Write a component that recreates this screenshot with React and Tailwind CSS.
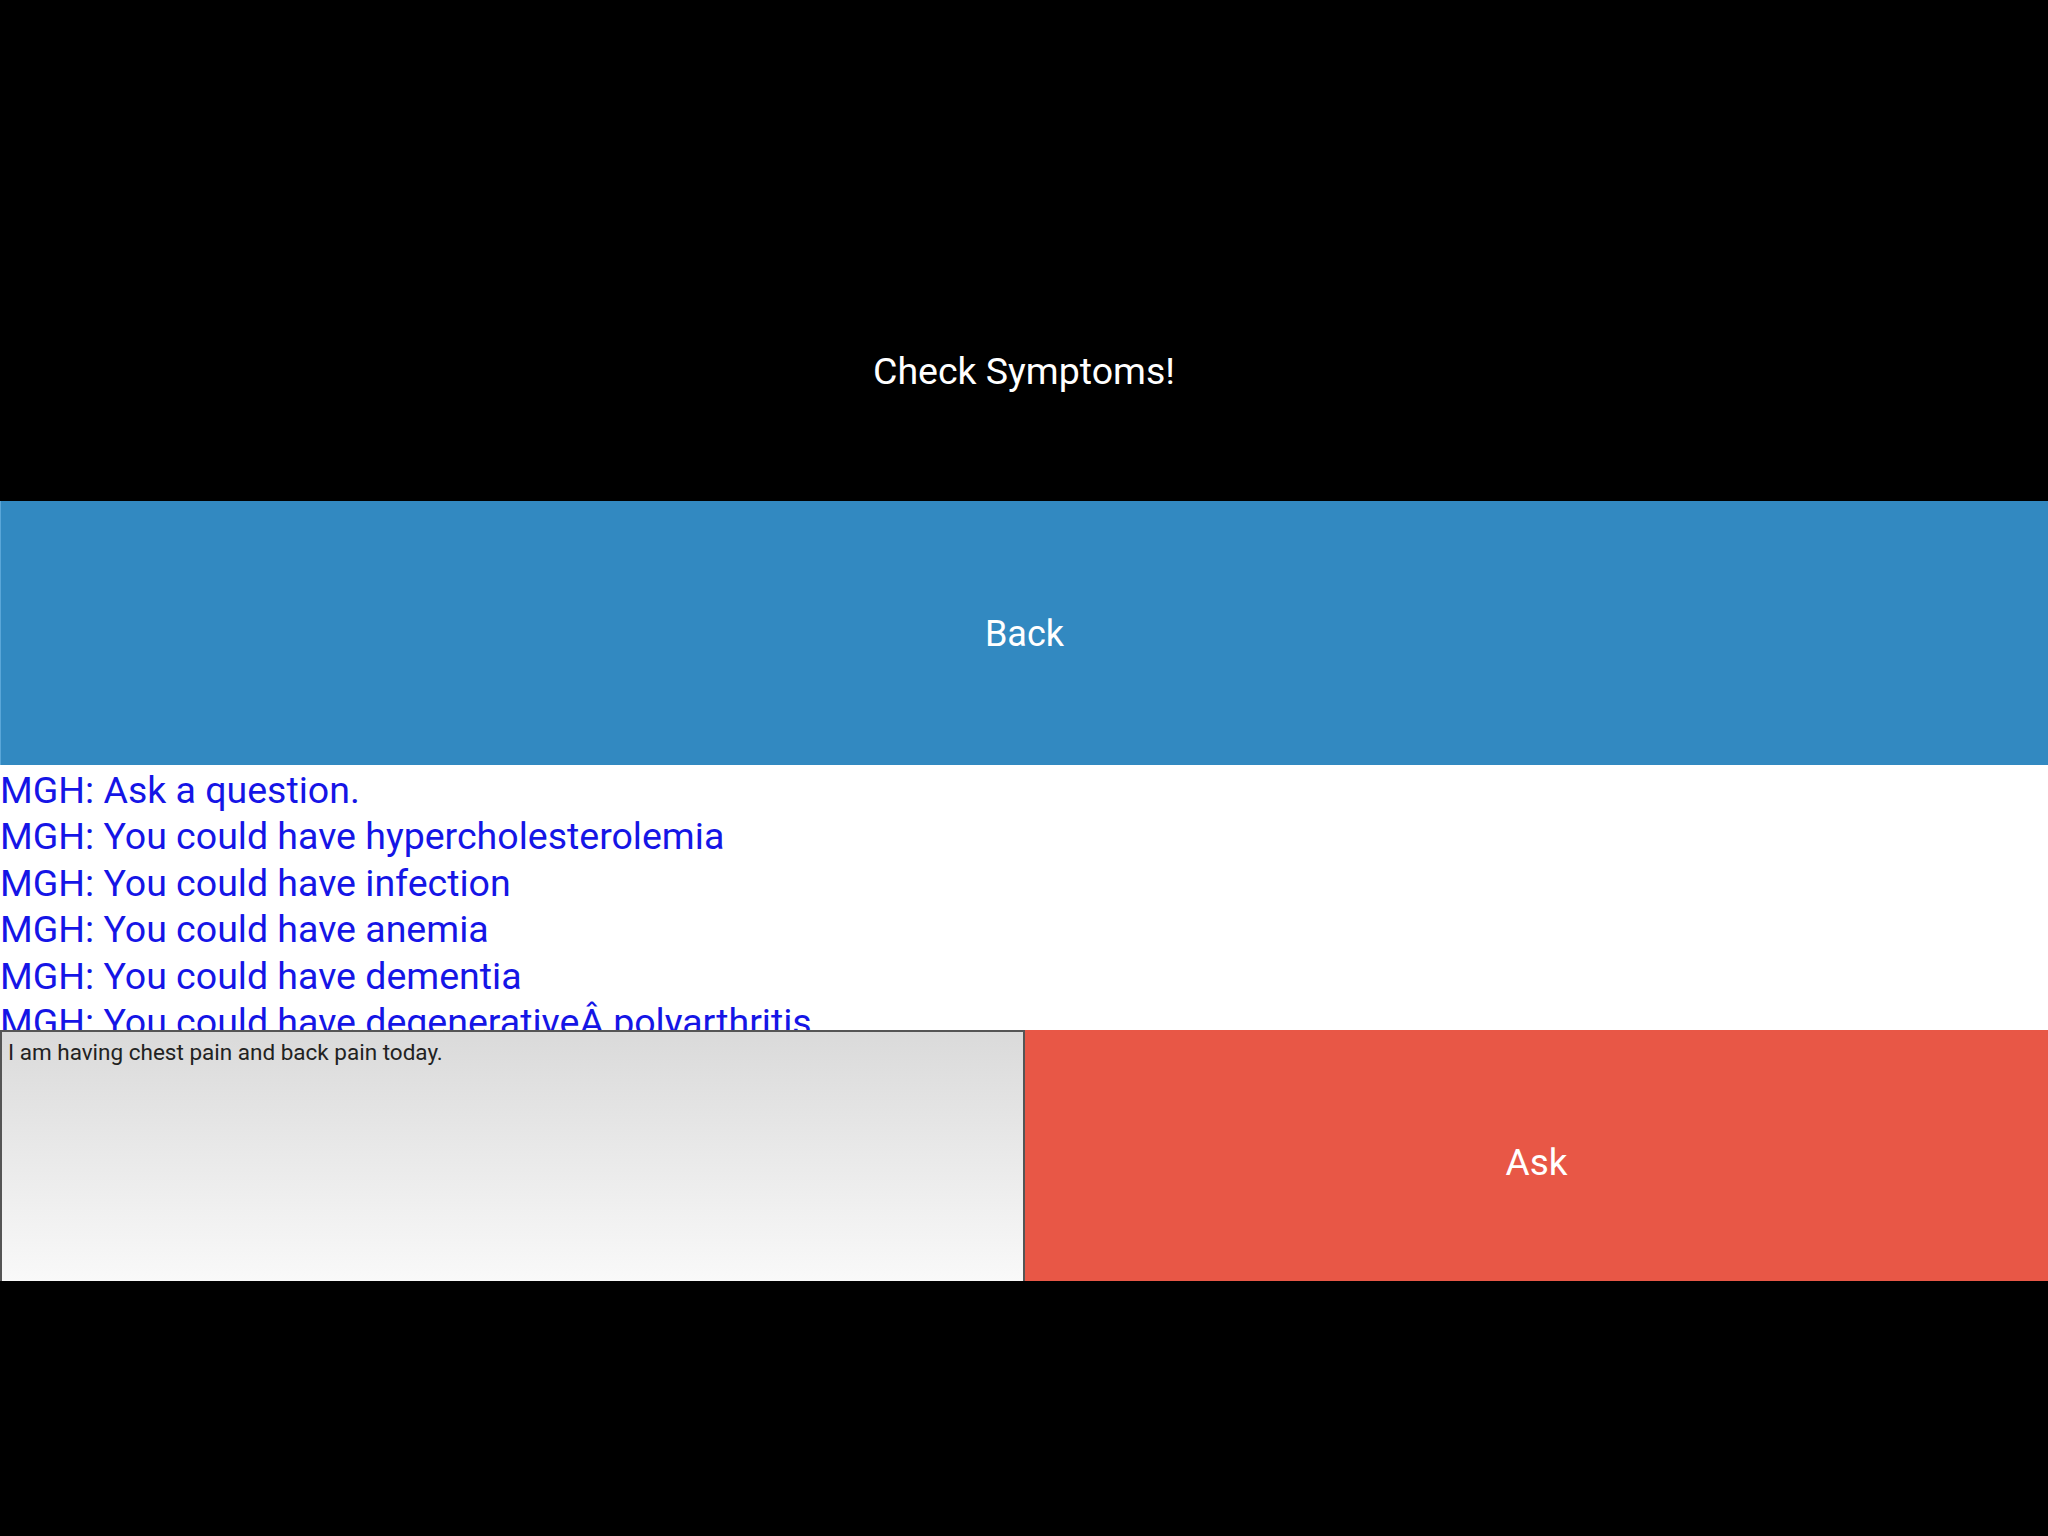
import React from 'react';

const messages = [
  'MGH: Ask a question.',
  'MGH: You could have hypercholesterolemia',
  'MGH: You could have infection',
  'MGH: You could have anemia',
  'MGH: You could have dementia',
  'MGH: You could have degenerativeÂ polyarthritis',
];

export default function App() {
  return (
    <div className="min-h-screen w-full bg-black font-['Roboto','Liberation_Sans',sans-serif]">
      <header className="h-[501px] flex items-end justify-center pb-[108px]">
        <h1 className="text-[37.5px] leading-[44px] text-white font-normal">Check Symptoms!</h1>
      </header>

      <button className="w-full h-[264px] bg-[#3289c1] border-l border-[#5aa6d8] text-white text-[36px] flex items-center justify-center pt-[2px]">
        Back
      </button>

      <div className="h-[265px] bg-white overflow-hidden pt-[2px]">
        {messages.map((msg, i) => (
          <p key={i} className="text-[37.5px] leading-[46.4px] text-[#1515e6] whitespace-nowrap">
            {msg}
          </p>
        ))}
      </div>

      <div className="flex h-[251px]">
        <textarea
          className="w-[1025px] h-full resize-none border-2 border-b-0 border-[#555] bg-gradient-to-b from-[#dadada] to-[#f9f9f9] text-[#222] text-[22.5px] leading-[30px] px-[6px] pt-[5px] outline-none"
          defaultValue="I am having chest pain and back pain today."
        />
        <button className="flex-1 h-full bg-[#e85746] text-white text-[37px] flex items-center justify-center pt-[14px]">
          Ask
        </button>
      </div>
    </div>
  );
}
